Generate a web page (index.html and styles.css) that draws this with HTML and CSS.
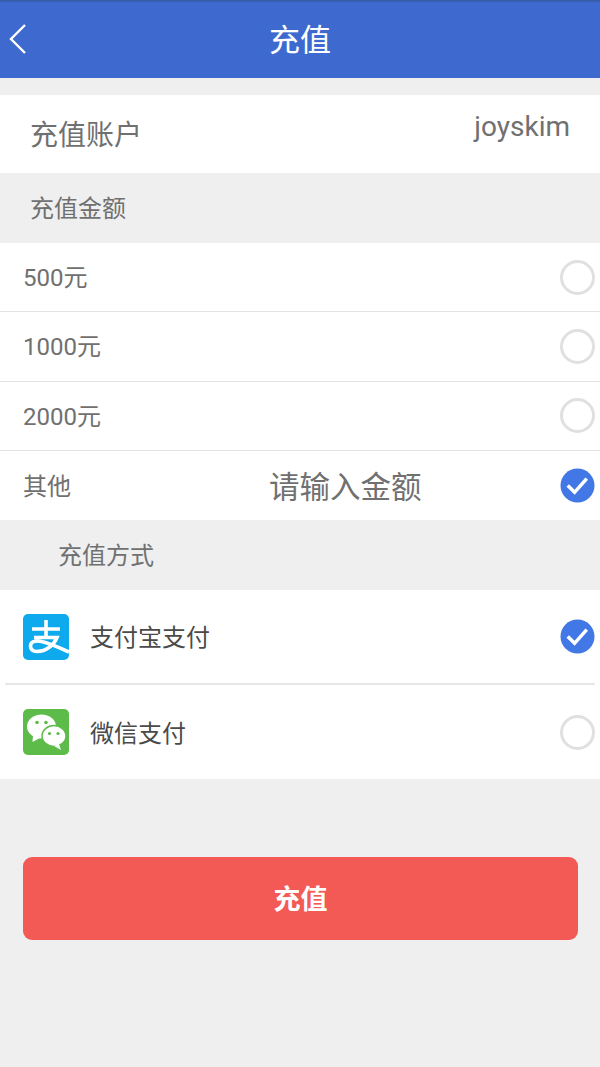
FILE: index.html
```html
<!DOCTYPE html>
<html lang="zh-CN">
<head>
<meta charset="utf-8">
<title>充值</title>
<link rel="stylesheet" href="styles.css">
</head>
<body>
<div class="page">
  <header class="topbar">
    <svg class="back" width="20" height="32" viewBox="0 0 20 32"><path d="M17 2 L3 16 L17 30" fill="none" stroke="#fff" stroke-width="2.4"/></svg>
    <h1 class="title">充值</h1>
  </header>
  <section class="account">
    <span class="account-label">充值账户</span>
    <span class="account-value">joyskim</span>
  </section>
  <div class="section-head">充值金额</div>
  <section class="amounts">
    <div class="amount"><span>500元</span><span class="radio"></span></div>
    <div class="amount"><span>1000元</span><span class="radio"></span></div>
    <div class="amount"><span>2000元</span><span class="radio"></span></div>
    <div class="amount"><span class="other">其他</span><span class="placeholder">请输入金额</span>
      <svg class="check" viewBox="0 0 36 36"><circle cx="18" cy="18" r="17.5" fill="#4277e6"/><path d="M8 18 L15 25 L27.500 11" fill="none" stroke="#fff" stroke-width="3.600"/></svg>
    </div>
  </section>
  <div class="section-head section-head-pay">充值方式</div>
  <section class="pays">
    <div class="pay">
      <svg class="pay-icon" viewBox="0 0 46 46"><rect width="46" height="46" rx="5" fill="#0fa9ee"/><path d="M9 15 H37 M23 6 V23 M11 23.500 H34 C31 31 23 37.500 14 37.500 C9.500 37.500 7.500 35 7.500 32 C7.500 28 12 26 18.500 27.500 C26 29 35 33 46 38" fill="none" stroke="#fff" stroke-width="3.600"/></svg>
      <span class="pay-name">支付宝支付</span>
      <svg class="check" viewBox="0 0 36 36"><circle cx="18" cy="18" r="17.5" fill="#4277e6"/><path d="M8 18 L15 25 L27.500 11" fill="none" stroke="#fff" stroke-width="3.600"/></svg>
    </div>
    <div class="pay">
      <svg class="pay-icon" viewBox="0 0 46 46"><rect width="46" height="46" rx="5" fill="#5dbb4a"/><ellipse cx="18.500" cy="17.500" rx="14.500" ry="12" fill="#fff"/><path d="M10 26 L9.500 33 L17 29 Z" fill="#fff"/><ellipse cx="31" cy="27" rx="12" ry="10.500" fill="#fff" stroke="#5dbb4a" stroke-width="1.500"/><path d="M36 35 L38 41 L31 37 Z" fill="#fff"/><circle cx="14" cy="13.500" r="1.800" fill="#5dbb4a"/><circle cx="23" cy="13.500" r="1.800" fill="#5dbb4a"/><circle cx="26.500" cy="24.500" r="1.600" fill="#5dbb4a"/><circle cx="35" cy="24.500" r="1.600" fill="#5dbb4a"/></svg>
      <span class="pay-name">微信支付</span>
      <span class="radio"></span>
    </div>
  </section>
  <div class="action"><button class="submit" type="button">充值</button></div>
</div>
</body>
</html>
```
FILE: styles.css
```css
* { box-sizing: border-box; }
html, body { margin: 0; padding: 0; }
body {
  background: #efefef;
  font-family: Roboto, "Noto Sans CJK SC", sans-serif;
  color: #707070;
}
.page { width: 600px; height: 1067px; overflow: hidden; }
.topbar {
  height: 78px;
  background: linear-gradient(#34589f 0, #3e6acf 3px);
  display: flex;
  align-items: center;
  justify-content: center;
  position: relative;
}
.back { position: absolute; left: 8px; top: 23px; }
.title { margin: 0; color: #fff; font-size: 31px; font-weight: 400; line-height: 78px; height: 78px; padding-top: 2px; }
.account {
  margin-top: 17px;
  height: 78px;
  background: #fff;
  display: flex;
  justify-content: space-between;
  padding: 0 30px;
}
.account-label { font-size: 28px; line-height: 82px; }
.account-value { font-size: 28px; line-height: 64px; }
.section-head { height: 70px; padding-left: 30px; font-size: 24px; line-height: 73px; }
.section-head-pay { padding-left: 58px; }
.amounts { background: #fff; }
.amount {
  height: 69.250px;
  padding: 0 5px 0 23px;
  display: flex;
  align-items: center;
  justify-content: space-between;
  font-size: 24px;
  position: relative;
  border-bottom: 1px solid #e3e3e3;
}
.amount > span:first-child { margin-top: -3px; }
.amount > span.other { margin-top: -1px; }
.amount:last-child { border-bottom: 0; }
.other { width: 246px; }
.placeholder { flex: 1; font-size: 30.500px; }
.radio {
  width: 35px;
  height: 35px;
  border: 3px solid #e0e0e0;
  border-radius: 50%;
  background: #fff;
  flex: none;
}
.check { width: 35px; height: 35px; flex: none; }
.pays { background: #fff; }
.pay {
  height: 95px;
  margin: 0 5px;
  padding: 0 0 0 18px;
  display: flex;
  align-items: center;
  border-bottom: 2px solid #e6e6e6;
}
.pay:last-child { border-bottom: 0; height: 94px; }
.pay-icon { width: 46px; height: 46px; flex: none; }
.pay-name { flex: 1; margin-left: 21px; font-size: 24px; color: #4a4a4a; margin-top: -2px; }
.action { padding: 78px 22px 0 23px; }
.submit {
  display: block;
  width: 100%;
  height: 83px;
  border: 0;
  border-radius: 9px;
  background: #f35a55;
  color: #fff;
  font-family: inherit;
  font-size: 27px;
  font-weight: 700;
  padding: 0 0 3px;
}
```
